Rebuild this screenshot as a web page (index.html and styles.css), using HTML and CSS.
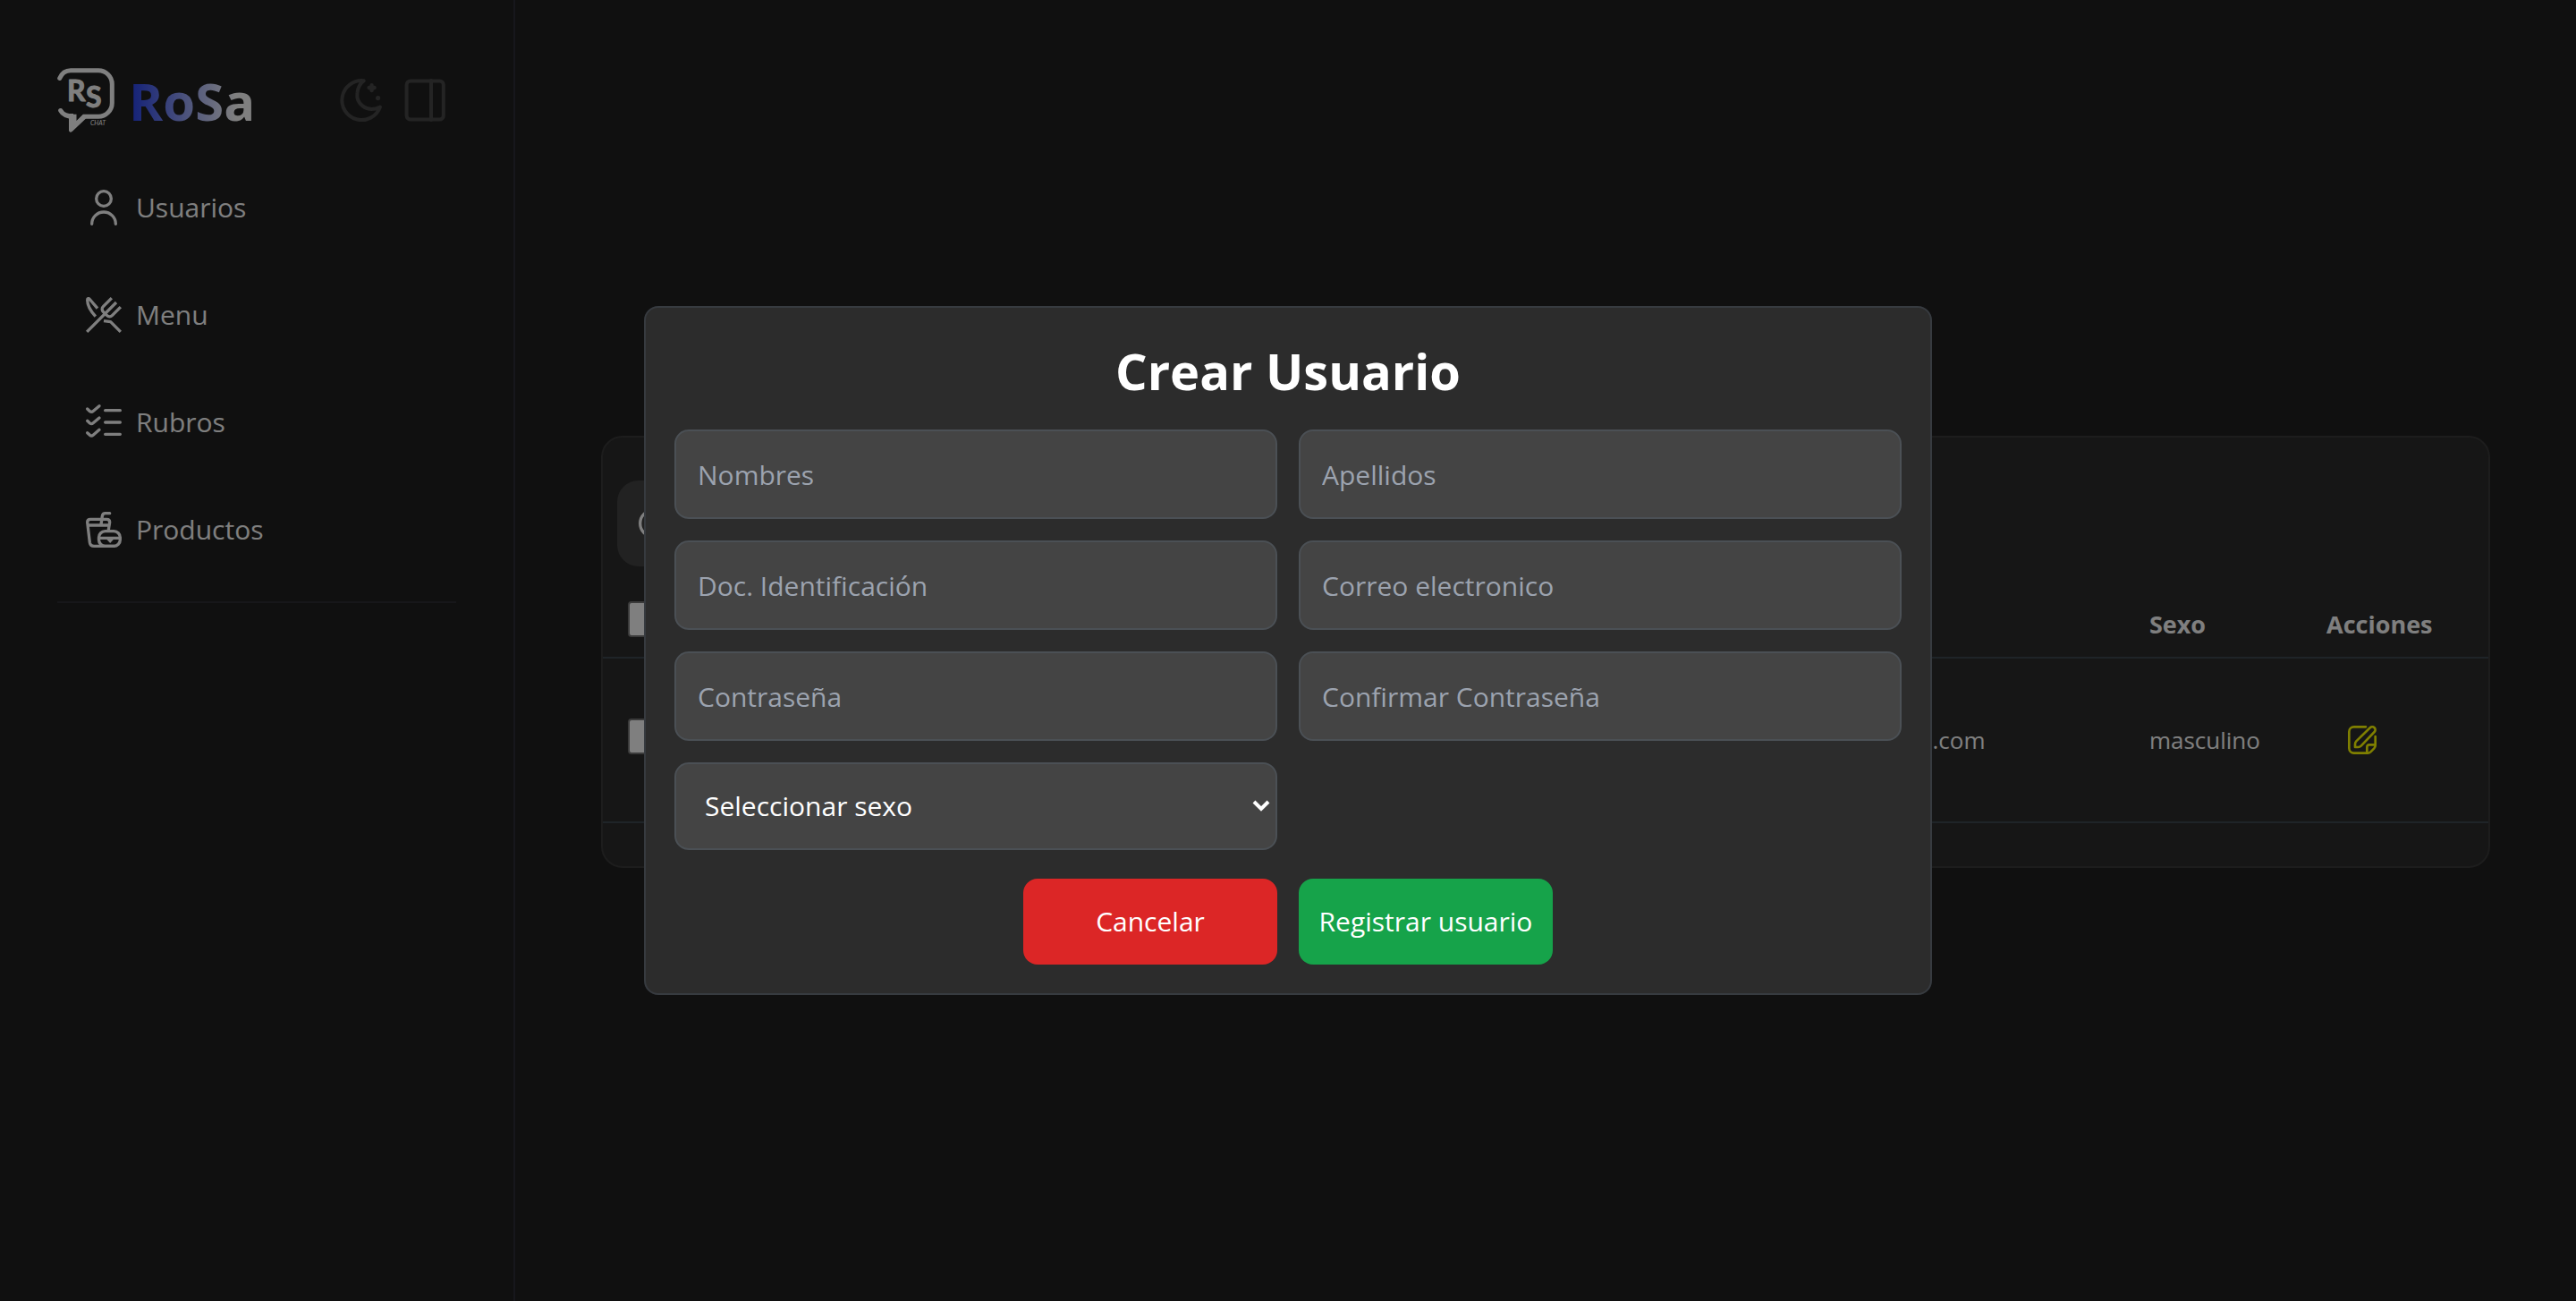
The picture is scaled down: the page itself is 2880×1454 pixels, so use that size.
FILE: index.html
```html
<!DOCTYPE html>
<html lang="es">
<head>
  <meta charset="utf-8">
  <meta name="viewport" content="width=device-width, initial-scale=1">
  <title>RoSa - Usuarios</title>
  <link rel="stylesheet" href="styles.css">
</head>
<body>
  <div class="app">
    <aside class="sidebar">
      <header class="brand">
        <svg class="brand-logo" viewBox="0 0 64 72" aria-hidden="true">
          <path class="bubble" d="M2.7 11.5C5 6 9.500 2.700 15 2.700H46A15.300 15.300 0 0 1 61.300 18V39A15.300 15.300 0 0 1 46 54.300H30L19 65V54.300C11 54.300 6 52 3.700 47.500"/>
          <path class="tail" d="M13 51h5v6l3 3 8-8 3 4.500L16.500 71a2 2 0 0 1-3.500-1.500z"/>
          <text class="mark" x="11" y="37">R</text>
          <text class="mark" x="32" y="44">S</text>
          <text class="mark-small" x="37" y="64">CHAT</text>
        </svg>
        <span class="brand-name">RoSa</span>
        <div class="brand-actions">
          <button class="icon-button" type="button" aria-label="Cambiar tema">
            <svg class="icon icon-large" viewBox="0 0 24 24">
              <path d="M13.400 1.100A11 11 0 1 0 22.500 15.800C14.500 19.500 9 13.500 9.700 8C10 5 11.300 2.700 13.400 1.100Z"/>
              <path class="solid" d="M17.800 2.500c.8 0 1.100.6 1.100 1.400.8 0 1.500.3 1.500 1.100s-.7 1.200-1.500 1.200c0 .8-.3 1.400-1.100 1.400s-1.100-.6-1.100-1.400c-.8 0-1.500-.4-1.500-1.200s.7-1.100 1.500-1.100c0-.8.3-1.400 1.100-1.400z"/>
              <circle class="solid" cx="21.300" cy="10.800" r="1.300"/>
            </svg>
          </button>
          <button class="icon-button" type="button" aria-label="Contraer panel">
            <svg class="icon icon-large" viewBox="0 0 24 24">
              <rect x="1.300" y="1.200" width="20.600" height="21.600" rx="2.200"/>
              <path d="M15 1v22"/>
            </svg>
          </button>
        </div>
      </header>
      <nav class="nav">
        <a class="nav-link" href="#usuarios">
          <svg class="icon" viewBox="0 0 24 24"><circle cx="12" cy="6" r="5"/><path d="M4 23a8 8 0 0 1 16 0"/></svg>
          Usuarios
        </a>
        <a class="nav-link" href="#menu">
          <svg class="icon icon-butt" viewBox="0 0 24 24">
            <path d="M.7 23.300L20.400 3.600M17.300.7L11.600 6.400A2.400 2.400 0 0 0 11.600 9.800L14.200 12.400A2.400 2.400 0 0 0 17.600 12.400L23.300 6.700"/>
            <path d="M7.800 7.600L2.600 1.500C1.900.7 1 .9 1 2C1 6 3.500 9.800 6.500 13"/>
            <path d="M12 16L16.600 16.600L23.300 23.300"/>
          </svg>
          Menu
        </a>
        <a class="nav-link" href="#rubros">
          <svg class="icon" viewBox="0 0 24 24">
            <path d="M1 3L2.700 4.600Q3.800 5.400 4.900 4.500L9 1M13 4H23"/>
            <path d="M1 11L2.700 12.600Q3.800 13.400 4.900 12.500L9 9M13 12H23"/>
            <path d="M1 19L2.700 20.600Q3.800 21.400 4.900 20.500L9 17M13 20H23"/>
          </svg>
          Rubros
        </a>
        <a class="nav-link" href="#productos">
          <svg class="icon" viewBox="0 0 24 24">
            <path d="M16 1H13Q11.300 1 11 2.800L10.200 8.500M1.300 9H15.600M15.200 12L16 7Q16 5 14 5H3Q1 5 1 7L2.600 20.500Q3 23 5.500 23H19"/>
            <rect x="8.700" y="13" width="14.300" height="10" rx="4.200"/>
            <path d="M9 17.600H23"/>
            <path class="solid" d="M13.500 18h5.500l-2.700 3z"/>
          </svg>
          Productos
        </a>
      </nav>
    </aside>

    <main class="content">
      <section class="card">
        <div class="toolbar">
          <button class="search-button" type="button" aria-label="Buscar">
            <svg class="icon" viewBox="0 0 24 24"><circle cx="10" cy="12" r="9"/><path d="M17 18l6 5"/></svg>
          </button>
        </div>
        <table class="table">
          <thead>
            <tr>
              <th class="col-check"><input class="check" type="checkbox" aria-label="Seleccionar todos"></th>
              <th class="col-mail"></th>
              <th class="col-sex">Sexo</th>
              <th>Acciones</th>
            </tr>
          </thead>
          <tbody>
            <tr>
              <td><input class="check" type="checkbox" aria-label="Seleccionar usuario"></td>
              <td>.com</td>
              <td>masculino</td>
              <td>
                <button class="edit-button" type="button" aria-label="Editar">
                  <svg class="icon icon-small" viewBox="0 0 24 24">
                    <path d="M15 1H5A4 4 0 0 0 1 5V19A4 4 0 0 0 5 23H16.500Q18 23 19 22L22 19Q23 18 23 16.500V9"/>
                    <path d="M16 23V18Q16 16 18 16H23"/>
                    <path d="M6 18V15.500Q6 14 7 13L18.600 1.700A2.400 2.400 0 0 1 22.200 5.300L11 17Q10 18 8.500 18Z"/>
                  </svg>
                </button>
              </td>
            </tr>
          </tbody>
        </table>
      </section>
    </main>
  </div>

  <div class="overlay">
    <form class="dialog" role="dialog" aria-modal="true" aria-labelledby="dialog-title">
      <h1 class="dialog-title" id="dialog-title">Crear Usuario</h1>
      <div class="fields">
        <input class="field" type="text" placeholder="Nombres" aria-label="Nombres">
        <input class="field" type="text" placeholder="Apellidos" aria-label="Apellidos">
        <input class="field" type="text" placeholder="Doc. Identificación" aria-label="Doc. Identificación">
        <input class="field" type="email" placeholder="Correo electronico" aria-label="Correo electronico">
        <input class="field" type="password" placeholder="Contraseña" aria-label="Contraseña">
        <input class="field" type="password" placeholder="Confirmar Contraseña" aria-label="Confirmar Contraseña">
        <div class="select-wrap">
          <select class="field field-select" aria-label="Seleccionar sexo">
            <option>Seleccionar sexo</option>
          </select>
          <svg class="chevron" viewBox="0 0 20 16" aria-hidden="true"><path d="M2 3l8 8 8-8"/></svg>
        </div>
      </div>
      <div class="actions">
        <button class="button button-cancel" type="button">Cancelar</button>
        <button class="button button-submit" type="submit">Registrar usuario</button>
      </div>
    </form>
  </div>
</body>
</html>
```
FILE: styles.css
```css
*,
*::before,
*::after {
  box-sizing: border-box;
}

body {
  margin: 0;
  background: #202020;
  color: #fff;
  font-family: "Segoe UI", "Open Sans", "Noto Sans", sans-serif;
  font-size: 30px;
  line-height: 48px;
}

button,
input,
select {
  margin: 0;
  font: inherit;
  color: inherit;
}

button {
  padding: 0;
  border: 0;
  background: none;
  cursor: pointer;
}

.app {
  display: grid;
  grid-template-columns: 20% 1fr;
  min-height: 100vh;
}

.icon {
  display: block;
  flex: none;
  width: 40px;
  height: 40px;
  fill: none;
  stroke: currentColor;
  stroke-width: 2;
  stroke-linecap: round;
  stroke-linejoin: round;
  overflow: visible;
}

.icon-butt {
  stroke-linecap: butt;
}

.icon-large {
  width: 48px;
  height: 48px;
}

.icon-small {
  width: 32px;
  height: 32px;
}

.icon .solid {
  fill: currentColor;
  stroke: none;
}

/* Sidebar */

.sidebar {
  padding: 76px 64px;
  border-right: 2px solid #2f2f38;
}

.brand {
  display: flex;
  align-items: center;
  gap: 16px;
  height: 72px;
  padding-right: 10px;
  margin-bottom: 24px;
}

.brand-logo {
  flex: none;
  width: 64px;
  height: 72px;
}

.bubble {
  fill: none;
  stroke: #fff;
  stroke-width: 5;
  stroke-linecap: round;
}

.tail {
  fill: #fff;
}

.mark {
  fill: #fff;
  stroke: #fff;
  stroke-width: 1;
  stroke-linejoin: round;
  font: 700 32px "Lato", sans-serif;
}

.mark-small {
  fill: #fff;
  font: italic 400 7px "Lato", sans-serif;
}

.brand-name {
  padding-top: 2px;
  background: linear-gradient(to right, #2440f0, #fff 85%);
  -webkit-background-clip: text;
  background-clip: text;
  color: transparent;
  font-size: 58px;
  font-weight: 700;
  line-height: 72px;
}

.brand-actions {
  display: flex;
  gap: 24px;
  margin-left: auto;
}

.icon-button {
  color: #484848;
}

.nav {
  padding-bottom: 20px;
  border-bottom: 2px solid #2f2f34;
}

.nav-link {
  display: flex;
  align-items: center;
  gap: 16px;
  height: 120px;
  padding-left: 32px;
  color: inherit;
  text-decoration: none;
}

/* Users table */

.content {
  display: flex;
  flex-direction: column;
  justify-content: center;
  padding: 2px 96px 0;
}

.card {
  padding: 48px 0;
  border: 2px solid #3a3a3a;
  border-radius: 24px;
  background: #2c2c2c;
}

.toolbar {
  padding: 0 16px;
}

.search-button {
  display: flex;
  align-items: center;
  width: 96px;
  height: 96px;
  padding: 0 24px;
  border-radius: 24px;
  background: #444;
}

.table {
  width: 100%;
  margin-top: 26px;
  border-collapse: collapse;
  table-layout: fixed;
  font-size: 26px;
  line-height: 40px;
}

.table th,
.table td {
  padding: 0 32px;
  border-bottom: 2px solid #3e4850;
  text-align: left;
}

.table th {
  height: 76px;
  padding-top: 4px;
  font-size: 27px;
}

.table td {
  height: 184px;
}

.table th:first-child,
.table td:first-child {
  padding: 0 28px 8px;
}

.col-check {
  width: 69%;
}

.col-mail {
  width: 11.5%;
}

.col-sex {
  width: 9.4%;
}

.check {
  appearance: none;
  display: block;
  width: 40px;
  height: 40px;
  border: 2px solid #767676;
  border-radius: 4px;
  background: #fff;
}

.edit-button {
  display: block;
  padding: 0 24px;
  color: #ff0;
}

/* Dialog */

.overlay {
  position: fixed;
  inset: 0;
  display: flex;
  align-items: center;
  justify-content: center;
  background: rgba(0, 0, 0, 0.5);
}

.dialog {
  width: 50%;
  padding: 32px;
  border: 2px solid #373b40;
  border-radius: 16px;
  background: #2c2c2c;
}

.dialog-title {
  margin: 0;
  padding: 2px 0 30px;
  font-size: 56px;
  line-height: 72px;
  text-align: center;
}

.fields {
  display: grid;
  grid-template-columns: 1fr 1fr;
  gap: 24px;
}

.field {
  display: block;
  width: 100%;
  height: 100px;
  padding: 0 24px;
  border: 2px solid #4b5055;
  border-radius: 16px;
  background: #444;
}

.field::placeholder {
  color: #9ca3af;
  opacity: 1;
}

.select-wrap {
  position: relative;
}

.field-select {
  appearance: none;
  height: 98px;
  padding: 0 32px;
}

.chevron {
  position: absolute;
  top: 41px;
  right: 8px;
  width: 20px;
  height: 16px;
  fill: none;
  stroke: #fff;
  stroke-width: 4;
  pointer-events: none;
}

.actions {
  display: flex;
  justify-content: center;
  gap: 24px;
  margin-top: 32px;
}

.button {
  min-width: 284px;
  height: 96px;
  padding: 0 16px;
  border-radius: 16px;
}

.button-cancel {
  background: #dc2626;
}

.button-submit {
  background: #16a34a;
}
```
